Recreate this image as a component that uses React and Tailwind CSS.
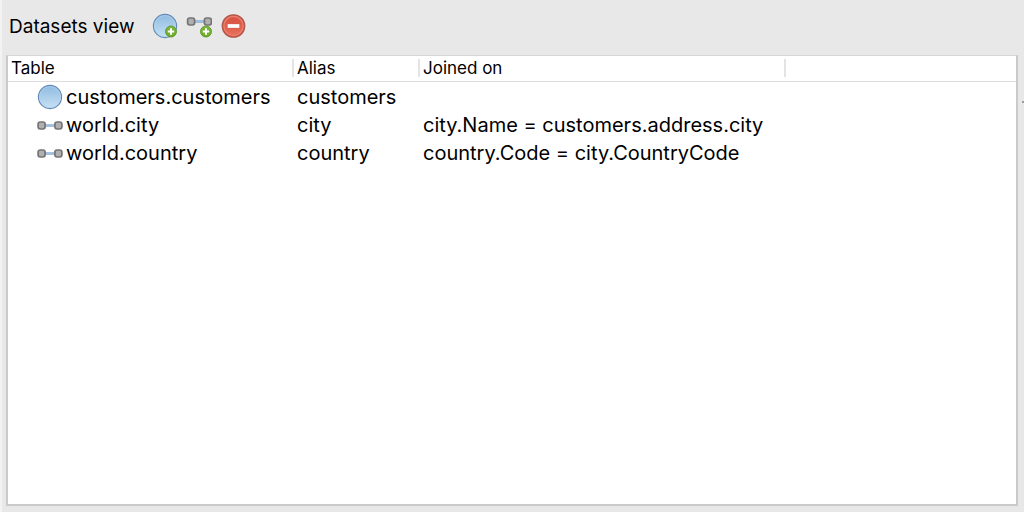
import React, { useState } from 'react';

const datasets = [
  { table: 'customers.customers', alias: 'customers', joinedOn: '', kind: 'source' },
  { table: 'world.city', alias: 'city', joinedOn: 'city.Name = customers.address.city', kind: 'join' },
  { table: 'world.country', alias: 'country', joinedOn: 'country.Code = city.CountryCode', kind: 'join' },
];

const Gradients = () => (
  <svg width="0" height="0" className="absolute" aria-hidden="true">
    <defs>
      <linearGradient id="sphere" x1="0" y1="0" x2="0" y2="1">
        <stop offset="0" stopColor="#8fbbe0" />
        <stop offset="1" stopColor="#c8e1f4" />
      </linearGradient>
      <linearGradient id="plus" x1="0" y1="0" x2="0" y2="1">
        <stop offset="0" stopColor="#7fb640" />
        <stop offset="1" stopColor="#6dac25" />
      </linearGradient>
      <linearGradient id="minus" x1="0" y1="0" x2="0" y2="1">
        <stop offset="0" stopColor="#d9503f" />
        <stop offset="1" stopColor="#e5705c" />
      </linearGradient>
    </defs>
  </svg>
);

const Sphere = () => (
  <>
    <circle cx="13" cy="13" r="11.6" fill="url(#sphere)" stroke="#6188b8" strokeWidth="1.1" />
    <circle cx="13" cy="13" r="10.5" fill="none" stroke="#b5d5ee" strokeOpacity="0.7" strokeWidth="0.9" />
  </>
);

const Link = () => (
  <>
    <path d="M8 4.5h10" stroke="#7fa6ce" strokeWidth="2.4" />
    <path d="M8 4.3h10" stroke="#a9c9e6" strokeWidth="1" />
    <rect x="1.1" y="1" width="7" height="7" rx="2.2" fill="#b0b0b0" stroke="#747474" strokeWidth="1.7" />
    <rect x="17.9" y="1" width="7" height="7" rx="2.2" fill="#b0b0b0" stroke="#747474" strokeWidth="1.7" />
  </>
);

const PlusBadge = () => (
  <>
    <circle cx="6" cy="6" r="5.5" fill="url(#plus)" stroke="#5c962a" strokeWidth="0.9" />
    <path d="M6 2.8v6.4M2.8 6h6.4" stroke="#fff" strokeWidth="2" />
  </>
);

const SourceIcon = () => (
  <svg width="26" height="26" viewBox="0 0 26 26" aria-hidden="true">
    <Sphere />
  </svg>
);

const JoinIcon = () => (
  <svg width="26" height="9" viewBox="0 0 26 9" aria-hidden="true">
    <Link />
  </svg>
);

const AddSourceIcon = () => (
  <svg width="26" height="26" viewBox="0 0 26 26" aria-hidden="true">
    <Sphere />
    <g transform="translate(13 12.5)">
      <PlusBadge />
    </g>
  </svg>
);

const AddJoinIcon = () => (
  <svg width="26" height="26" viewBox="0 0 26 26" aria-hidden="true">
    <g transform="translate(0.5 4)">
      <Link />
    </g>
    <g transform="translate(14 12.5)">
      <PlusBadge />
    </g>
  </svg>
);

const RemoveIcon = () => (
  <svg width="26" height="26" viewBox="0 0 26 26" aria-hidden="true">
    <circle cx="13.5" cy="13" r="11.2" fill="#dc5a48" stroke="#b3564b" strokeWidth="1.3" />
    <circle cx="13.5" cy="13" r="9.6" fill="url(#minus)" stroke="#ec8070" strokeWidth="1.2" />
    <rect x="7.5" y="11" width="12" height="4" rx="0.6" fill="#fff" stroke="#c8402f" strokeOpacity="0.4" strokeWidth="0.6" />
  </svg>
);

const HeaderCell = ({ children }) => (
  <th scope="col" className="h-[26px] p-0 pb-0.5 font-normal text-left border-b border-[#dcdcdc]">
    <div className="h-[18px] pl-[3px] flex items-center border-r-2 border-[#e4e4e4]">{children}</div>
  </th>
);

const App = () => {
  const [rows, setRows] = useState(datasets);

  const handleRemove = () => setRows(rows.slice(0, -1));

  return (
    <div className="relative min-h-screen flex flex-col bg-[#e8e8e8] border-l-2 border-[#f3f3f3] pl-1 pr-1.5 pb-1.5 font-['Inter',sans-serif] text-black">
      <Gradients />

      {/* Toolbar */}
      <header className="h-[55px] pl-[3px] pb-1 flex items-center gap-[18px]">
        <h1 className="text-[19px] leading-6 font-normal pt-0.5">Datasets view</h1>
        <div className="flex items-center gap-2">
          <button type="button" aria-label="Add dataset" className="cursor-pointer">
            <AddSourceIcon />
          </button>
          <button type="button" aria-label="Add join" className="cursor-pointer">
            <AddJoinIcon />
          </button>
          <button type="button" aria-label="Remove dataset" onClick={handleRemove} className="cursor-pointer">
            <RemoveIcon />
          </button>
        </div>
      </header>

      {/* Datasets table */}
      <main className="flex-1 bg-white border-2 border-t border-[#cacaca] border-t-[#d6d6d6]">
        <table className="w-full table-fixed border-separate border-spacing-0">
          <colgroup>
            <col className="w-[286px]" />
            <col className="w-[126px]" />
            <col className="w-[366px]" />
            <col />
          </colgroup>
          <thead className="text-[17px] leading-5">
            <tr>
              <HeaderCell>Table</HeaderCell>
              <HeaderCell>Alias</HeaderCell>
              <HeaderCell>Joined on</HeaderCell>
              <td className="p-0 border-b border-[#dcdcdc]" />
            </tr>
          </thead>
          <tbody className="text-[20px] leading-[26px] whitespace-nowrap">
            {rows.map((row) => (
              <tr key={row.alias}>
                <td className="p-0 pt-0.5 pl-[29px]">
                  <div className="flex items-center gap-[3px]">
                    {row.kind === 'source' ? <SourceIcon /> : <JoinIcon />}
                    <span>{row.table}</span>
                  </div>
                </td>
                <td className="p-0 pt-0.5 pl-[3px]">{row.alias}</td>
                <td className="p-0 pt-0.5 pl-[3px]">{row.joinedOn}</td>
                <td className="p-0" />
              </tr>
            ))}
          </tbody>
        </table>
      </main>

      {/* Splitter handle on the right edge */}
      <div className="absolute right-0 top-[101px] w-0.5 h-0.5 bg-[#9c9c9c]" />
    </div>
  );
};

export default App;
